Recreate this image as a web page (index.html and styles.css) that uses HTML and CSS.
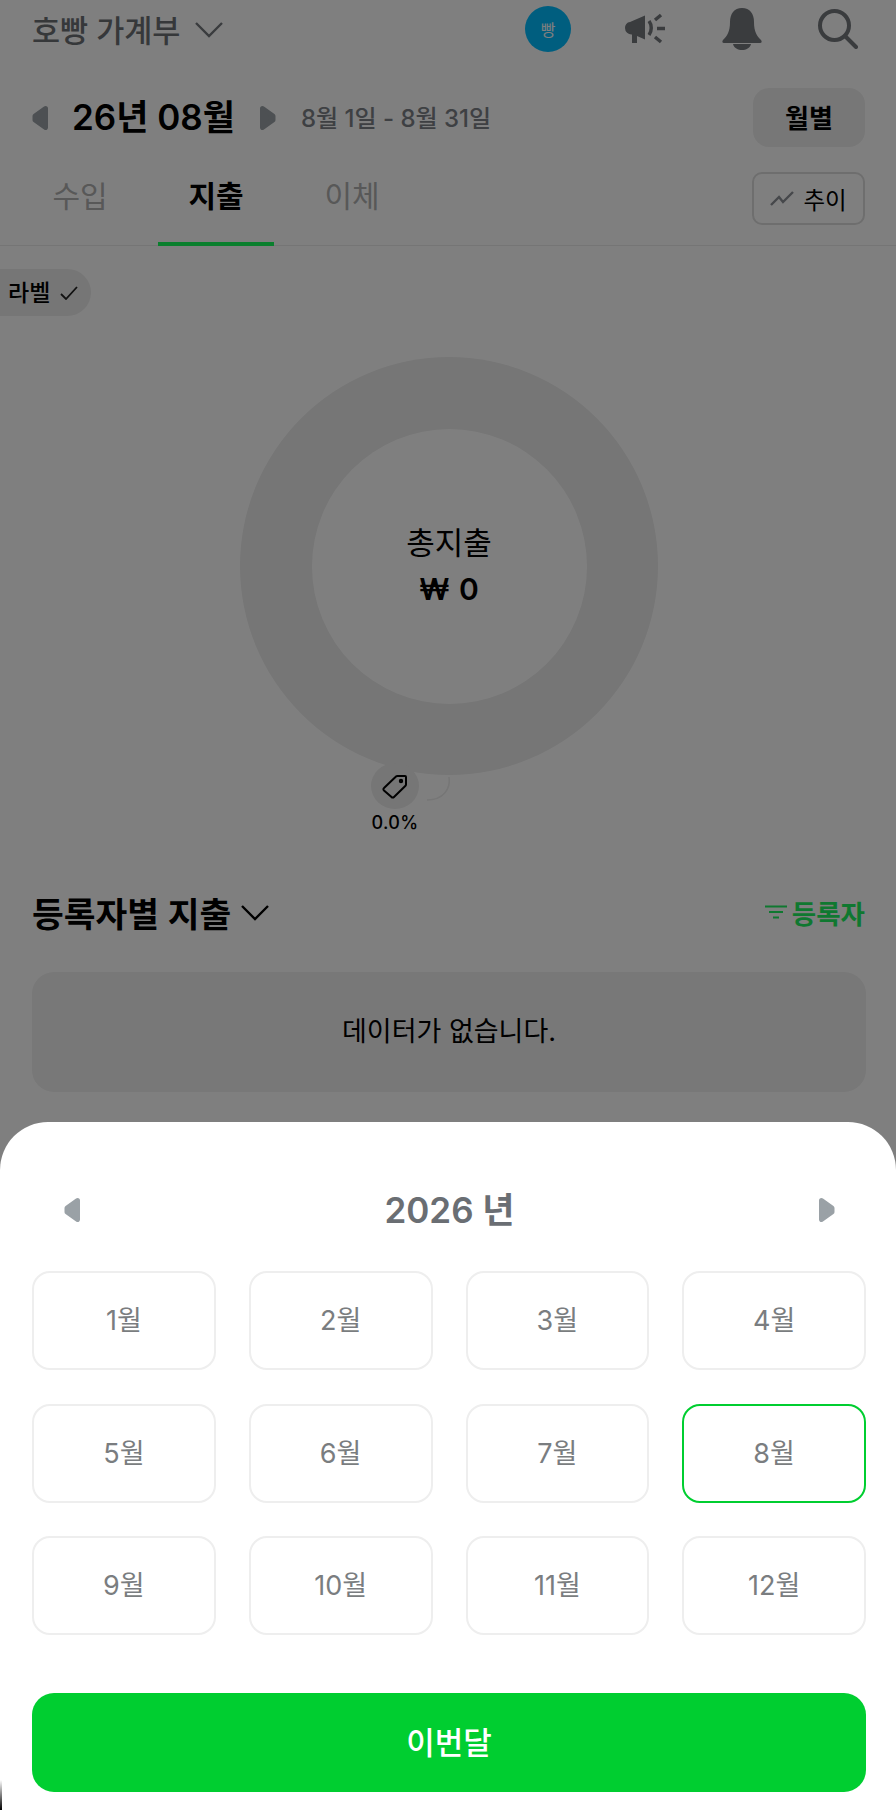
FILE: index.html
```html
<!DOCTYPE html>
<html lang="ko">
<head>
<meta charset="utf-8">
<title>호빵 가계부</title>
<link rel="stylesheet" href="styles.css">
</head>
<body>
<div class="page">
	<header class="topbar">
		<div class="book">
			<span class="book-name">호빵 가계부</span>
			<svg class="chev" width="30" height="17" viewBox="0 0 30 17"><path d="M2 2l13 13L28 2"/></svg>
		</div>
		<div class="top-icons">
			<span class="avatar">빵</span>
			<svg class="ico-mega" width="42" height="32" viewBox="0 0 42 32"><path d="M1 15a5.500 5.500 0 0 1 5-6l15-6.500v24L13 23v7H8v-8.500A6.500 6.500 0 0 1 1 15z"/><path class="ln" d="M25 8c3 4 3 10 0 14M31 7l6-5M33 15.500h8M31 24l6 5"/></svg>
			<svg class="ico-bell" width="40" height="42" viewBox="0 0 40 42"><path d="M20 0c8 0 12 6 12 14 0 10 3 14 7 18 1 1 1 3-1 3H2c-2 0-2-2-1-3 4-4 7-8 7-18C8 6 12 0 20 0z"/><path d="M11 36h18c-1 4-5 6-9 6s-8-2-9-6z"/></svg>
			<svg class="ico-search" width="40" height="40" viewBox="0 0 40 40"><circle cx="16.500" cy="16.500" r="14.500"/><path d="M27 27l11 11"/></svg>
		</div>
	</header>

	<div class="period">
		<svg class="tri" width="16" height="24" viewBox="0 0 16 24"><path d="M13.500 2.500L3 10v4l10.500 7.500z"/></svg>
		<h1 class="period-title">26년 08월</h1>
		<svg class="tri" width="16" height="24" viewBox="0 0 16 24"><path d="M2.500 2.500L13 10v4L2.500 21.500z"/></svg>
		<span class="period-range">8월 1일 - 8월 31일</span>
		<span class="mode-btn">월별</span>
	</div>

	<nav class="tabs">
		<a class="tab tab-in">수입</a>
		<a class="tab tab-out current">지출</a>
		<a class="tab tab-move">이체</a>
		<span class="trend-btn">
			<svg width="24" height="17" viewBox="0 0 24 17"><path d="M1 15l8-8 4 5L23 2"/></svg>
			추이
		</span>
	</nav>

	<div class="label-row">
		<span class="label-chip"><span class="label-txt">라벨</span>
			<svg width="18" height="14" viewBox="0 0 18 14"><path d="M1 8l5 5L17 1"/></svg>
		</span>
	</div>

	<section class="chart">
		<div class="donut">
			<div class="donut-hole">
				<span class="total-name">총지출</span>
				<strong class="total-val">₩ 0</strong>
			</div>
		</div>
		<svg class="leader" width="30" height="26" viewBox="0 0 30 26"><path d="M24 1c2 12-6 23-22 23"/></svg>
		<div class="pin">
			<span class="pin-ico">
				<svg width="26" height="25" viewBox="0 0 26 25"><path d="M2 14L14 2.500c.5-.5 1-.5 1.500-.5H23c.8 0 1 .5 1 1v7.500c0 .5-.2 1-.5 1.300L12 23c-.8.8-1.800.8-2.500 0L2 16.500c-.8-.8-.8-1.800 0-2.500z"/><circle cx="19" cy="7" r="1.200"/></svg>
			</span>
			<span class="pin-pct">0.0%</span>
		</div>
	</section>

	<div class="sec-head">
		<h2 class="sec-title">등록자별 지출</h2>
		<svg class="chev chev-dark" width="30" height="17" viewBox="0 0 30 17"><path d="M2 2l13 13L28 2"/></svg>
		<span class="sec-filter">
			<svg width="22" height="14" viewBox="0 0 22 14"><path d="M0 1.500h22M4 7h14M8 12.500h6"/></svg>
			등록자
		</span>
	</div>
	<div class="empty">데이터가 없습니다.</div>
</div>

<div class="dim"></div>

<div class="sheet">
	<div class="year-row">
		<svg class="tri-light" width="16" height="24" viewBox="0 0 16 24"><path d="M13.500 2.500L3 10v4l10.500 7.500z"/></svg>
		<span class="year">2026 년</span>
		<svg class="tri-light" width="16" height="24" viewBox="0 0 16 24"><path d="M2.500 2.500L13 10v4L2.500 21.500z"/></svg>
	</div>
	<div class="months">
		<a class="month">1월</a>
		<a class="month">2월</a>
		<a class="month">3월</a>
		<a class="month">4월</a>
		<a class="month">5월</a>
		<a class="month">6월</a>
		<a class="month">7월</a>
		<a class="month on">8월</a>
		<a class="month">9월</a>
		<a class="month">10월</a>
		<a class="month">11월</a>
		<a class="month">12월</a>
	</div>
	<a class="this-month">이번달</a>
</div>
<div class="corner"></div>
</body>
</html>
```

FILE: styles.css
```css
* { box-sizing: border-box; }
html, body { margin: 0; padding: 0; }
body { position: relative; width: 896px; height: 1810px; overflow: hidden; background: #fff; color: #000; font-family: Inter, "Noto Sans CJK KR", sans-serif; }
h1, h2 { margin: 0; }

.page { height: 1810px; }

/* top bar */
.topbar { display: flex; align-items: center; justify-content: space-between; height: 58px; padding: 0 38px 0 32px; }
.book { display: flex; align-items: center; gap: 14px; }
.book-name { font-size: 30.500px; font-weight: 500; color: #6c7075; }
.chev path { fill: none; stroke: #74787d; stroke-width: 2.400; }
.chev-dark path { stroke: #000; }
.top-icons { display: flex; align-items: center; }
.avatar { display: flex; align-items: center; justify-content: center; width: 46px; height: 46px; border-radius: 50%; background: #00bcff; color: #fff; font-size: 16px; }
.ico-mega { margin-left: 53px; }
.ico-mega path { fill: #74787d; }
.ico-mega .ln { fill: none; stroke: #74787d; stroke-width: 3.500; }
.ico-bell { margin-left: 56px; }
.ico-bell path { fill: #74787d; }
.ico-search { margin-left: 56px; }
.ico-search circle, .ico-search path { fill: none; stroke: #74787d; stroke-width: 4; stroke-linecap: round; }

/* period */
.period { display: flex; align-items: center; height: 59px; margin-top: 30px; padding: 0 31px 0 32px; }
.tri path { fill: #9aa1a6; stroke: #9aa1a6; stroke-width: 5; stroke-linejoin: round; }
.period-title { margin: 0 25px 0 24px; padding-bottom: 6px; font-size: 35px; font-weight: 600; }
.period-range { margin-left: 25px; padding-bottom: 2px; font-size: 24px; font-weight: 500; color: #7c8187; }
.mode-btn { display: flex; align-items: center; justify-content: center; width: 112px; height: 59px; padding-bottom: 3px; margin-left: auto; border-radius: 16px; background: #efefef; font-size: 26px; font-weight: 600; }

/* tabs */
.tabs { display: flex; align-items: center; position: relative; height: 75px; margin-top: 24px; padding-right: 31px; border-bottom: 1px solid #eaeaea; }
.tab { font-size: 30px; color: #b0b0b0; width: 116px; text-align: center; padding-bottom: 28px; }
.tab-in { margin-left: 22px; margin-right: 20px; }
.tab-out { font-weight: 600; color: #000; margin-right: 20px; }
.tab-out.current { height: 75px; padding-top: 1px; padding-bottom: 0; border-bottom: 4px solid #14ff5a; }
.trend-btn { display: flex; align-items: center; justify-content: center; gap: 9px; width: 113px; height: 53px; margin: -19px 0 0 auto; border: 2px solid #dcdcdc; border-radius: 10px; font-size: 23.500px; }
.trend-btn path { fill: none; stroke: #8c9096; stroke-width: 2.400; }

/* label chip */
.label-row { margin-top: 23px; }
.label-chip { display: inline-flex; align-items: center; gap: 10px; width: 91px; height: 47px; padding-left: 8px; border-radius: 0 24px 24px 0; background: #ececec; font-size: 23px; font-weight: 500; }
.label-txt { padding-bottom: 4px; }
.label-chip path { fill: none; stroke: #222; stroke-width: 1.800; }

/* chart */
.chart { position: relative; height: 576px; }
.donut { position: absolute; left: 240px; top: 41px; width: 418px; height: 418px; border-radius: 50%; background: #ececec; display: flex; align-items: center; justify-content: center; }
.donut-hole { display: flex; flex-direction: column; align-items: center; gap: 10px; width: 275px; height: 275px; padding-top: 96px; border-radius: 50%; background: #fff; }
.total-name { font-size: 31px; line-height: 36px; }
.total-val { font-size: 30px; line-height: 36px; font-weight: 600; word-spacing: 2px; }
.leader { position: absolute; left: 425px; top: 460px; }
.leader path { fill: none; stroke: #ececec; stroke-width: 1.500; }
.pin { position: absolute; left: 366px; top: 447px; width: 58px; display: flex; flex-direction: column; align-items: center; }
.pin-ico { display: flex; align-items: center; justify-content: center; width: 48px; height: 46px; border-radius: 50%; background: #ececec; }
.pin-ico path, .pin-ico circle { fill: none; stroke: #000; stroke-width: 2; }
.pin-pct { margin-top: 3px; font-size: 18px; font-weight: 500; letter-spacing: .3px; }

/* by member */
.sec-head { display: flex; align-items: center; height: 40px; padding: 0 31px 0 32px; }
.sec-title { font-size: 34.500px; font-weight: 600; }
.sec-head .chev { margin-left: 9px; }
.sec-filter { display: flex; align-items: center; gap: 5px; margin-left: auto; font-size: 26.500px; font-weight: 600; color: #1ef060; }
.sec-filter path { fill: none; stroke: #1ef060; stroke-width: 2; }
.empty { display: flex; align-items: center; justify-content: center; height: 120px; margin: 40px 30px 0 32px; padding-bottom: 6px; border-radius: 22px; background: #f0f0f0; font-size: 27px; }

/* dim + sheet lie over the page */
.dim { position: absolute; left: 0; top: 0; width: 100%; height: 100%; background: rgba(0, 0, 0, .5); }
.sheet { position: absolute; left: 0; bottom: 0; width: 100%; height: 688px; padding: 0 30px 0 32px; border-radius: 48px 48px 0 0; background: #fff; }
.year-row { display: flex; align-items: center; justify-content: space-between; height: 48px; margin-top: 64px; padding: 0 31px 0 32px; }
.tri-light path { fill: #9aa1a6; stroke: #9aa1a6; stroke-width: 5; stroke-linejoin: round; }
.year { padding-bottom: 6px; font-size: 35px; font-weight: 600; color: #6a6e73; }
.months { display: grid; grid-template-columns: repeat(4, 1fr); gap: 33.500px 33px; margin-top: 37px; }
.month { display: flex; align-items: center; justify-content: center; height: 99px; padding-bottom: 4px; border: 2px solid #eeeeee; border-radius: 18px; font-size: 27px; color: #7a7d80; }
.month.on { border-color: #00ce30; }
.this-month { display: flex; align-items: center; justify-content: center; height: 99px; margin-top: 58px; padding-bottom: 4px; border-radius: 22px; background: #00ce30; color: #fff; font-size: 31px; font-weight: 500; }
.corner { position: absolute; left: 0; bottom: 0; width: 2px; height: 30px; background: linear-gradient(#fff, #000); }
```
